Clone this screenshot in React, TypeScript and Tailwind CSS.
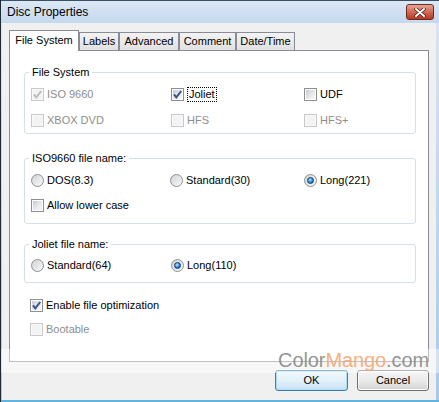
import React from 'react';

type BoxProps = { checked?: boolean; disabled?: boolean };

const CheckBox: React.FC<BoxProps> = ({ checked, disabled }) => (
  <span
    className={`relative h-[13px] w-[13px] shrink-0 border ${
      disabled ? 'border-[#c9c9c9] bg-[#f8f8f8]' : 'border-[#8e8f8f] bg-white'
    }`}
  >
    <span
      className={`absolute inset-[1px] ${
        disabled ? 'bg-[#f3f3f3]' : 'bg-gradient-to-br from-[#c8ccd2] via-[#e4e6e9] to-[#fbfbfb]'
      }`}
    />
    {checked && (
      <svg viewBox="0 0 11 11" className="absolute inset-0 h-[11px] w-[11px]">
        <path
          d="M2 5.4 L4.3 8.4 L9.2 2"
          fill="none"
          stroke={disabled ? '#bdbdbd' : '#3a4f92'}
          strokeWidth="1.9"
        />
      </svg>
    )}
  </span>
);

const Radio: React.FC<{ checked?: boolean }> = ({ checked }) => (
  <span className="flex h-[13px] w-[13px] shrink-0 items-center justify-center rounded-full border border-[#8e8f8f] bg-gradient-to-br from-[#cfd2d6] to-[#fbfbfb]">
    {checked && (
      <span className="h-[7px] w-[7px] rounded-full border border-[#0d3a78] bg-[radial-gradient(circle_at_40%_35%,#bfe6ff,#2b88d8_55%,#0b4a95)]" />
    )}
  </span>
);

type ItemProps = {
  label: string;
  radio?: boolean;
  checked?: boolean;
  disabled?: boolean;
  focus?: boolean;
};

const Item: React.FC<ItemProps> = ({ label, radio, checked, disabled, focus }) => (
  <label className="flex h-[16px] items-center gap-[3px] whitespace-nowrap">
    {radio ? <Radio checked={checked} /> : <CheckBox checked={checked} disabled={disabled} />}
    <span
      className={`leading-[13px] ${disabled ? 'text-[#8d8d8d]' : 'text-black'} ${
        focus ? 'border border-dotted border-black px-[1px]' : ''
      }`}
    >
      {label}
    </span>
  </label>
);

const Group: React.FC<{ title: string; className?: string; children: React.ReactNode }> = ({
  title,
  className,
  children,
}) => (
  <fieldset className={`rounded-[3px] border border-[#d5dfe5] ${className ?? ''}`}>
    <legend className="ml-[4px] px-[3px] leading-[13px]">{title}</legend>
    {children}
  </fieldset>
);

const Tab: React.FC<{ label: string; width: string; active?: boolean }> = ({ label, width, active }) =>
  active ? (
    <div
      className={`${width} relative z-10 -mb-[1px] flex h-[21px] items-center justify-center border border-b-0 border-[#898c95] bg-white pb-[2px]`}
    >
      {label}
    </div>
  ) : (
    <div
      className={`${width} flex h-[18px] items-center justify-center border border-b-0 border-[#898c95] bg-gradient-to-b from-[#f3f3f3] to-[#e1e1e1]`}
    >
      {label}
    </div>
  );

const App: React.FC = () => {
  return (
    <div className="relative flex h-[402px] w-[439px] flex-col overflow-hidden border-l border-[#1e2a36] bg-gradient-to-b from-[#d9e6f4] to-[#a9c8e6] font-['Liberation_Sans',Arial,sans-serif] text-[11px] text-black">
      {/* title bar */}
      <div className="flex h-[23px] shrink-0 items-center justify-between border-t border-[#3d4f63] bg-gradient-to-b from-[#dce8f5] to-[#c4d8ee] pl-[6px] pr-[5px]">
        <span className="text-[12px] leading-none">Disc Properties</span>
        <div className="flex h-[16px] w-[28px] items-center justify-center rounded-[3px] border border-[#6e2b22] bg-gradient-to-b from-[#e3a595] via-[#cf6a55] to-[#b8341f]">
          <svg viewBox="0 0 12 9" className="h-[9px] w-[12px]">
            <path d="M2 1 L10 8 M10 1 L2 8" stroke="#4a1a12" strokeWidth="3.4" strokeLinecap="round" />
            <path d="M2 1 L10 8 M10 1 L2 8" stroke="#ffffff" strokeWidth="1.9" strokeLinecap="round" />
          </svg>
        </div>
      </div>

      {/* body */}
      <div className="mb-[2px] ml-[1px] mr-[3px] flex flex-1 flex-col bg-[#f0f0f0] pl-[7px] pt-[7px]">
        <div className="flex h-[20px] items-end">
          <Tab label="File System" width="w-[70px]" active />
          <Tab label="Labels" width="w-[40px]" />
          <Tab label="Advanced" width="w-[60px]" />
          <Tab label="Comment" width="w-[57px]" />
          <Tab label="Date/Time" width="w-[59px]" />
        </div>

        <div className="flex h-[312px] w-[420px] flex-col border border-[#898c95] bg-white pl-[14px] pr-[12px] pt-[15px]">
          <Group title="File System">
            <div className="grid grid-cols-[140px_133px_1fr] gap-y-[10px] pb-[5px] pl-[6px] pt-[7px]">
              <Item label="ISO 9660" checked disabled />
              <Item label="Joliet" checked focus />
              <Item label="UDF" />
              <Item label="XBOX DVD" disabled />
              <Item label="HFS" disabled />
              <Item label="HFS+" disabled />
            </div>
          </Group>

          <Group title="ISO9660 file name:" className="mt-[18px]">
            <div className="flex flex-col gap-[9px] pb-[10px] pl-[6px] pt-[7px]">
              <div className="grid grid-cols-[139px_134px_1fr]">
                <Item label="DOS(8.3)" radio />
                <Item label="Standard(30)" radio />
                <Item label="Long(221)" radio checked />
              </div>
              <Item label="Allow lower case" />
            </div>
          </Group>

          <Group title="Joliet file name:" className="mt-[14px]">
            <div className="grid grid-cols-[140px_1fr] pb-[9px] pl-[6px] pt-[6px]">
              <Item label="Standard(64)" radio />
              <Item label="Long(110)" radio checked />
            </div>
          </Group>

          <div className="mt-[14px] flex flex-col gap-[8px] pl-[6px]">
            <Item label="Enable file optimization" checked />
            <Item label="Bootable" disabled />
          </div>
        </div>

        <div className="flex gap-[9px] pl-[266px] pt-[8px]">
          <button className="h-[21px] w-[73px] rounded-[3px] border border-[#3c7fb1] bg-gradient-to-b from-[#f2f9fd] via-[#e3f1fb] to-[#c9e2f3] shadow-[inset_0_0_0_1px_#a9dbf6]">
            OK
          </button>
          <button className="h-[21px] w-[72px] rounded-[3px] border border-[#707070] bg-gradient-to-b from-[#f3f3f3] via-[#ebebeb] to-[#d3d3d3] shadow-[inset_0_0_0_1px_#fcfcfc]">
            Cancel
          </button>
        </div>
      </div>

      {/* bottom frame line */}
      <div className="absolute bottom-0 left-0 right-0 h-[2px] bg-[#5fb5df]" />

      {/* watermark band */}
      <div className="absolute left-0 right-0 top-[349px] h-[24px] bg-white/45" />
      <div className="absolute right-[10px] top-[348px] text-[20px] leading-[24px] tracking-[-0.1px]">
        <span className="text-[#7f7f7f]/85">Color</span>
        <span className="text-[#f6a56f]/90">Mango</span>
        <span className="text-[#7f7f7f]/85">.com</span>
      </div>
    </div>
  );
};

export default App;
